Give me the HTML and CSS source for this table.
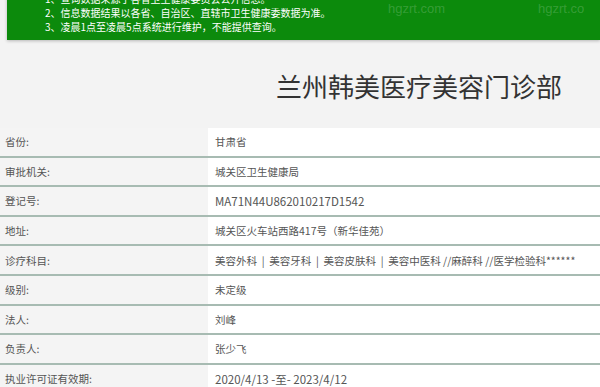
FILE: index.html
```html
<!DOCTYPE html>
<html lang="zh-CN">
<head>
<meta charset="utf-8">
<title>兰州韩美医疗美容门诊部</title>
<link rel="stylesheet" href="styles.css">
</head>
<body>
<div class="notice">
  <p>1、查询数据来源于各省卫生健康委员会公开信息。</p>
  <p>2、信息数据结果以各省、自治区、直辖市卫生健康委数据为准。</p>
  <p>3、凌晨1点至凌晨5点系统进行维护，不能提供查询。</p>
  <span class="wm wm1">hgzrt.com</span>
  <span class="wm wm2">hgzrt.co</span>
</div>
<h1 class="title">兰州韩美医疗美容门诊部</h1>
<div class="table">
  <div class="row"><div class="label">省份:</div><div class="value">甘肃省</div></div>
  <div class="row"><div class="label">审批机关:</div><div class="value">城关区卫生健康局</div></div>
  <div class="row"><div class="label">登记号:</div><div class="value num">MA71N44U862010217D1542</div></div>
  <div class="row"><div class="label">地址:</div><div class="value">城关区火车站西路417号（新华佳苑）</div></div>
  <div class="row"><div class="label">诊疗科目:</div><div class="value">美容外科 &nbsp;| &nbsp;美容牙科 &nbsp;| &nbsp;美容皮肤科 &nbsp;| &nbsp;美容中医科 //麻醉科 //医学检验科******</div></div>
  <div class="row"><div class="label">级别:</div><div class="value">未定级</div></div>
  <div class="row"><div class="label">法人:</div><div class="value">刘峰</div></div>
  <div class="row"><div class="label">负责人:</div><div class="value">张少飞</div></div>
  <div class="row"><div class="label">执业许可证有效期:</div><div class="value num">2020/4/13 -至- 2023/4/12</div></div>
</div>
</body>
</html>
```
FILE: styles.css
```css
html, body {
  margin: 0;
  padding: 0;
}
body {
  background: #f3f3f3;
  font-family: "Noto Sans CJK SC", "Noto Sans", sans-serif;
  color: #444;
  overflow: hidden;
}
.notice {
  position: relative;
  margin: -8px 0 0 7px;
  padding: 0 0 6px 38px;
  background: #0c8a0c;
  box-shadow: 0 1px 3px rgba(0,0,0,0.25);
  color: #fff;
  font-size: 10px;
  overflow: hidden;
}
.notice p {
  margin: 0;
  line-height: 14px;
  height: 14px;
}
.wm {
  position: absolute;
  top: 10px;
  font-family: "Liberation Sans", sans-serif;
  font-size: 13px;
  line-height: 14px;
  color: rgba(255,255,255,0.18);
}
.wm1 { left: 381px; }
.wm2 { left: 531px; }
.title {
  margin: 31px 38px 27px 0;
  text-align: right;
  font-weight: normal;
  font-size: 26px;
  line-height: 30px;
  color: #333;
}
.table {
  display: flex;
  flex-direction: column;
}
.row {
  display: flex;
  height: 27.6px;
  border-bottom: 2px solid #a7bbb2;
  font-size: 10.5px;
}
.label {
  width: 203px;
  padding-left: 5px;
  display: flex;
  align-items: center;
  background: #f4f4f4;
  color: #555;
}
.value {
  flex: 1;
  padding-left: 7px;
  display: flex;
  align-items: center;
  background: #fff;
  color: #555;
}
.value.num {
  font-size: 11.5px;
}
```
